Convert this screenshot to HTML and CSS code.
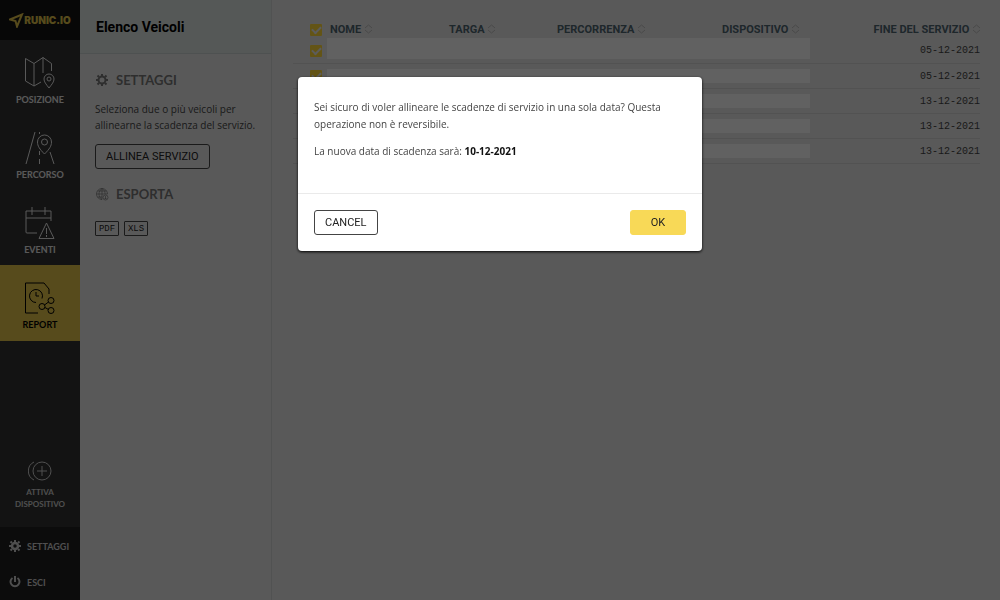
FILE: index.html
```html
<!DOCTYPE html>
<html lang="it">
<head>
    <meta charset="UTF-8">
    <title>Elenco Veicoli</title>
    <link rel="stylesheet" href="styles.css">
</head>
<body>

<div class="app">
    <!-- Menu -->
    <nav class="sidebar">
        <a href="#" class="logo">
            <svg width="15" height="15" viewBox="0 0 15 15"><path d="M1 6.500 13 1.500 8 13.500 6.500 8Z" fill="none" stroke="currentColor" stroke-width="2"/></svg>
            <span>RUNIC.IO</span>
        </a>
        <a href="#" class="nav-item">
            <svg width="32" height="34" viewBox="0 0 32 34">
                <path d="M17 26 10 30 1.500 25V2.500L10 7.500l9-6 8.500 6V15M10 7.500V30M19 1.500V17"/>
                <path d="M25 32c-3-4-5-6-5-9a5 5 0 0 1 10 0c0 3-2 5-5 9z"/><circle cx="25" cy="23" r="2"/>
            </svg>
            <span>POSIZIONE</span>
        </a>
        <a href="#" class="nav-item">
            <svg width="32" height="34" viewBox="0 0 32 34">
                <path d="M11 1 2 33M15.500 1v2M15.500 20v4M15.500 28v5M26 21l4 12"/>
                <path d="M20.500 23c-5-5-7-8-7-12a7 7 0 0 1 14 0c0 4-2 7-7 12z"/><circle cx="20.500" cy="11" r="3"/>
            </svg>
            <span>PERCORSO</span>
        </a>
        <a href="#" class="nav-item">
            <svg width="32" height="34" viewBox="0 0 32 34">
                <path d="M13 27H3a1 1 0 0 1-1-1V5h25v10M2 12h25M8 1v8M21 1v8"/>
                <path d="M22.500 17 15 32.500h15zM22.500 22v6M22.500 29v2"/>
            </svg>
            <span>EVENTI</span>
        </a>
        <a href="#" class="nav-item active">
            <svg width="32" height="34" viewBox="0 0 32 34">
                <path d="M14 32H1.500V2H20l5 6v5"/>
                <path d="M12 21.500A6.500 6.500 0 1 1 18 17.500M12 11v4h3"/>
                <circle cx="18" cy="25.500" r="3"/><circle cx="27" cy="19.500" r="3"/><circle cx="27" cy="29.500" r="3"/>
                <path d="m20.500 24 4-3M21 26.500l3.500 2"/>
            </svg>
            <span>REPORT</span>
        </a>
        <a href="#" class="nav-activate">
            <svg width="24" height="20" viewBox="0 0 24 20"><circle cx="14" cy="10" r="9"/><path d="M14 5v10M9 10h10M6 1a10 10 0 0 0 0 18"/></svg>
            <span>ATTIVA<br>DISPOSITIVO</span>
        </a>
        <div class="nav-bottom">
            <a href="#"><svg width="12" height="12" viewBox="0 0 12 12"><circle cx="6" cy="6" r="3" stroke-width="2.500"/><path stroke-width="2" d="M6 0v2M6 10v2M0 6h2M10 6h2M1.500 1.500 3 3M9 9l1.500 1.500M1.500 10.500 3 9M9 3l1.500-1.500"/></svg>SETTAGGI</a>
            <a href="#"><svg width="12" height="12" viewBox="0 0 12 12"><path stroke-width="2" d="M6 0v6M3.500 2a4.500 4.500 0 1 0 5 0"/></svg>ESCI</a>
        </div>
    </nav>

    <!-- Pannello -->
    <aside class="panel">
        <h1>Elenco Veicoli</h1>
        <div class="panel-body">
            <h2><svg width="14" height="14" viewBox="0 0 14 14"><circle cx="7" cy="7" r="3.500" stroke-width="2"/><path stroke-width="2" d="M7 1v2M7 11v2M1 7h2M11 7h2M2.500 2.500 4 4M10 10l1.500 1.500M2.500 11.500 4 10M10 4l1.500-1.500"/></svg>SETTAGGI</h2>
            <p>Seleziona due o più veicoli per allinearne la scadenza del servizio.</p>
            <button class="btn">ALLINEA SERVIZIO</button>
            <h2 class="export"><svg width="14" height="14" viewBox="0 0 14 14"><path stroke-width=".7" d="M7 12.500A5.500 5.500 0 1 1 12.500 7M7 1.500C3 4 3 10 7 12.500M7 1.500c3 2 3 4 3 5.500M7 1.500v11M2.500 4h9M1.500 7h11M2.500 10H7"/><circle cx="10.500" cy="10.500" r="2.500" stroke-width=".7"/><path stroke-width=".7" d="M10.500 9v3M9.500 11l1 1 1-1"/></svg>ESPORTA</h2>
            <div class="files">
                <button>PDF</button>
                <button>XLS</button>
            </div>
        </div>
    </aside>

    <!-- Tabella veicoli -->
    <main class="content">
        <table class="vehicles">
            <thead>
                <tr>
                    <th class="check"><input type="checkbox" aria-label="Seleziona tutti" checked></th>
                    <th class="name">NOME <svg class="sort" width="7" height="10" viewBox="0 0 7 10"><path d="M0 4 3.500 1 7 4M0 6l3.500 3L7 6"/></svg></th>
                    <th class="plate">TARGA <svg class="sort" width="7" height="10" viewBox="0 0 7 10"><path d="M0 4 3.500 1 7 4M0 6l3.500 3L7 6"/></svg></th>
                    <th class="distance">PERCORRENZA <svg class="sort" width="7" height="10" viewBox="0 0 7 10"><path d="M0 4 3.500 1 7 4M0 6l3.500 3L7 6"/></svg></th>
                    <th class="device">DISPOSITIVO <svg class="sort" width="7" height="10" viewBox="0 0 7 10"><path d="M0 4 3.500 1 7 4M0 6l3.500 3L7 6"/></svg></th>
                    <th class="end">FINE DEL SERVIZIO <svg class="sort" width="7" height="10" viewBox="0 0 7 10"><path d="M0 4 3.500 1 7 4M0 6l3.500 3L7 6"/></svg></th>
                </tr>
            </thead>
            <tbody>
                <tr class="first"><td><input type="checkbox" aria-label="Veicolo 1" checked></td><td colspan="4"><div class="hidden-data"></div></td><td class="date">05-12-2021</td></tr>
                <tr><td><input type="checkbox" aria-label="Veicolo 2" checked></td><td colspan="4"><div class="hidden-data"></div></td><td class="date">05-12-2021</td></tr>
                <tr><td><input type="checkbox" aria-label="Veicolo 3" checked></td><td colspan="4"><div class="hidden-data"></div></td><td class="date">13-12-2021</td></tr>
                <tr><td><input type="checkbox" aria-label="Veicolo 4" checked></td><td colspan="4"><div class="hidden-data"></div></td><td class="date">13-12-2021</td></tr>
                <tr><td><input type="checkbox" aria-label="Veicolo 5" checked></td><td colspan="4"><div class="hidden-data"></div></td><td class="date">13-12-2021</td></tr>
            </tbody>
        </table>
    </main>
</div>

<!-- Conferma -->
<div class="overlay">
    <div class="modal" role="dialog" aria-modal="true">
        <div class="modal-body">
            <p>Sei sicuro di voler allineare le scadenze di servizio in una sola data? Questa operazione non è reversibile.</p>
            <p>La nuova data di scadenza sarà: <strong>10-12-2021</strong></p>
        </div>
        <div class="modal-footer">
            <button class="btn">CANCEL</button>
            <button class="btn btn-ok">OK</button>
        </div>
    </div>
</div>

</body>
</html>
```

FILE: styles.css
```css
* {
    box-sizing: border-box;
}

body {
    margin: 0;
    font-family: "Open Sans", "Liberation Sans", sans-serif;
    font-size: 10px;
    color: #444;
    background: #e6e6e6;
}

a {
    color: inherit;
    text-decoration: none;
}

svg {
    fill: none;
    stroke: currentColor;
    flex: none;
}

.app {
    display: flex;
    min-height: 100vh;
}

/* Menu */
.sidebar {
    width: 80px;
    flex: none;
    display: flex;
    flex-direction: column;
    background: #333;
    color: #e6e6e6;
    font-family: Lato, "Liberation Sans", sans-serif;
    font-weight: 700;
}

.logo {
    height: 40px;
    display: flex;
    align-items: center;
    justify-content: center;
    background: #141414;
    color: #dfc048;
    font-family: Inter, sans-serif;
    font-size: 10px;
    font-weight: 900;
}

.nav-item {
    height: 75px;
    padding-top: 16px;
    display: flex;
    flex-direction: column;
    align-items: center;
    gap: 4px;
    font-size: 9px;
    line-height: 12px;
}

.nav-item.active {
    height: 76px;
    background: #dfc048;
    color: #000;
}

.nav-activate {
    margin-top: auto;
    padding-bottom: 17px;
    display: flex;
    flex-direction: column;
    align-items: center;
    gap: 5px;
    text-align: center;
    color: #ccc;
    font-size: 8px;
    line-height: 12px;
}

.nav-bottom {
    padding-top: 1px;
    background: #1f1f1f;
    color: #ccc;
}

.nav-bottom a {
    height: 36px;
    padding-left: 9px;
    display: flex;
    align-items: center;
    gap: 6px;
    font-size: 9px;
}

/* Pannello */
.panel {
    width: 192px;
    flex: none;
    border-right: 1px solid #d0d4d4;
}

.panel h1 {
    height: 54px;
    margin: 0;
    padding-left: 16px;
    border-bottom: 1px solid #c8d0d0;
    background: #dbe2e0;
    color: #000;
    font-family: Roboto, sans-serif;
    font-size: 14px;
    line-height: 54px;
}

.panel-body {
    padding: 16px 15px;
}

.panel h2 {
    margin: 0;
    display: flex;
    align-items: center;
    gap: 7px;
    color: #777;
    font-family: Lato, "Liberation Sans", sans-serif;
    font-size: 13px;
    line-height: 20px;
}

.panel p {
    margin: 11px 0;
    line-height: 16px;
}

.panel .export {
    margin-top: 15px;
}

.btn {
    height: 25px;
    padding: 0 10px;
    border: 1px solid #444;
    border-radius: 3px;
    background: none;
    color: #222;
    font-family: Roboto, sans-serif;
    font-size: 11px;
}

.files {
    display: flex;
    gap: 5px;
    margin-top: 17px;
}

.files button {
    width: 24px;
    height: 15px;
    padding: 0;
    border: 1px solid #444;
    border-radius: 1px;
    background: none;
    color: #222;
    font-family: "Liberation Mono", monospace;
    font-size: 9px;
    line-height: 12px;
}

/* Tabella */
.content {
    flex: 1;
    padding: 21px 20px 0 21px;
}

.vehicles {
    width: 100%;
    table-layout: fixed;
    border-collapse: collapse;
}

th,
td {
    padding: 0;
    text-align: left;
}

th {
    height: 17px;
    padding-top: 1px;
    color: #4e6470;
    font-family: Roboto, sans-serif;
    font-size: 11px;
    line-height: 16px;
    white-space: nowrap;
}

.check {
    width: 37px;
}

.name {
    width: 119px;
}

.plate {
    width: 108px;
}

.distance {
    width: 165px;
}

.device {
    width: 91px;
}

th.end {
    text-align: right;
}

td {
    height: 25px;
    border-bottom: 1px solid #d4d4d4;
}

.sort {
    margin-left: 1px;
    color: #bbb;
    vertical-align: -1px;
}

input[type="checkbox"] {
    appearance: none;
    display: grid;
    place-items: center;
    width: 12px;
    height: 12px;
    margin: 0 0 0 17px;
    border-radius: 1px;
    background: #ffd83a;
}

input[type="checkbox"]::before {
    content: "";
    width: 7px;
    height: 4px;
    border: solid #eee;
    border-width: 0 0 2px 2px;
    transform: translateY(-1px) rotate(-45deg);
}

.hidden-data {
    height: 14px;
    margin: 0 3px 0 -3px;
    background: #fafafa;
}

.first .hidden-data {
    height: 21px;
    margin-bottom: 4px;
}

td.date {
    text-align: right;
    font-family: "Liberation Mono", monospace;
    font-size: 10px;
}

/* Finestra di conferma */
.overlay {
    position: fixed;
    inset: 0;
    padding-top: 77px;
    display: flex;
    justify-content: center;
    align-items: flex-start;
    background: rgba(0, 0, 0, 0.61);
}

.modal {
    width: 404px;
    border-radius: 4px;
    background: #fff;
    box-shadow: 0 1px 3px #000;
}

.modal-body {
    padding: 22px 16px 23px;
}

.modal-body p {
    margin: 0 0 10px;
    line-height: 17px;
}

.modal-body strong {
    color: #111;
}

.modal-footer {
    display: flex;
    justify-content: space-between;
    padding: 16px;
    border-top: 1px solid #eaeaea;
}

.btn-ok {
    width: 56px;
    border-color: #f8d957;
    background: #f8d957;
}
```
